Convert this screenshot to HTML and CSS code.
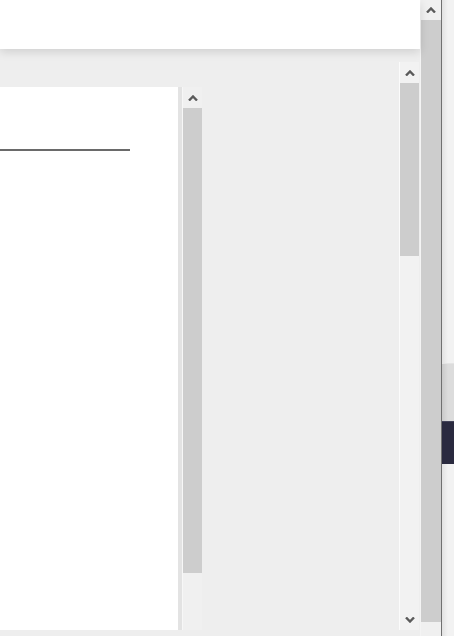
FILE: index.html
```html
<!DOCTYPE html>
<html lang="en">
<head>
    <meta charset="UTF-8">
    <meta name="viewport" content="width=device-width, initial-scale=1.0">
    <title>Document</title>
    <link rel="stylesheet" href="styles.css">
</head>
<body>
    <div class="main">
        <header class="header"></header>
        <div class="content">
            <div class="leftArea">
                <div class="panel">
                    <div class="sheet">
                        <div class="rule"></div>
                    </div>
                    <div class="gutter"></div>
                    <div class="scroll scrollLeft">
                        <div class="btn">
                            <svg width="10" height="6" viewBox="0 0 10 6"><polyline points="1,5.5 5,1.5 9,5.5" fill="none" stroke="#5a5a5a" stroke-width="2.4"/></svg>
                        </div>
                        <div class="thumb thumbLeft"></div>
                    </div>
                </div>
            </div>
            <div class="scroll scrollRight">
                <div class="btn">
                    <svg width="10" height="6" viewBox="0 0 10 6"><polyline points="1,5.5 5,1.5 9,5.5" fill="none" stroke="#5a5a5a" stroke-width="2.4"/></svg>
                </div>
                <div class="thumb thumbRight"></div>
                <div class="rest"></div>
                <div class="btn">
                    <svg width="10" height="6" viewBox="0 0 10 6"><polyline points="1,0.5 5,4.5 9,0.5" fill="none" stroke="#5a5a5a" stroke-width="2.4"/></svg>
                </div>
            </div>
        </div>
        <div class="foot"></div>
    </div>
    <div class="scroll scrollOuter">
        <div class="btn">
            <svg width="10" height="6" viewBox="0 0 10 6"><polyline points="1,5.5 5,1.5 9,5.5" fill="none" stroke="#5a5a5a" stroke-width="2.4"/></svg>
        </div>
        <div class="thumb thumbOuter"></div>
    </div>
    <div class="edge"></div>
    <div class="side">
        <div class="sideTop"></div>
        <div class="sideGrey"></div>
        <div class="sideDark"></div>
        <div class="sideBottom"></div>
    </div>
</body>
</html>
```

FILE: styles.css
```css
body {
    margin: 0;
    width: 454px;
    height: 636px;
    overflow: hidden;
    display: flex;
    background-color: #eeeeee;
}

.main {
    width: 420px;
    display: flex;
    flex-direction: column;
}

.header {
    height: 49px;
    background-color: white;
    box-shadow: 0 3px 9px rgba(0, 0, 0, 0.13);
    position: relative;
    z-index: 1;
}

.content {
    flex: 1;
    display: flex;
    background-color: #eeeeee;
}

.leftArea {
    width: 399px;
    padding-top: 38px;
    display: flex;
}

.panel {
    display: flex;
    flex: 1;
}

.sheet {
    width: 178px;
    background-color: white;
    padding-top: 62px;
}

.rule {
    width: 130px;
    height: 2px;
    background-color: #6a6a6a;
}

.gutter {
    width: 4px;
    background-color: #e3e3e3;
    border-right: 1px solid #f7f7f7;
}

.scroll {
    width: 19px;
    display: flex;
    flex-direction: column;
    background-color: #f0f0f0;
}

.btn {
    height: 21px;
    display: flex;
    align-items: center;
    justify-content: center;
    flex-shrink: 0;
}

.thumb {
    background-color: #cdcdcd;
}

.thumbLeft {
    height: 465px;
}

.scrollRight {
    margin-top: 13px;
    border-left: 1px solid #fbfbfb;
    background-color: #f2f2f2;
}

.thumbRight {
    height: 173px;
}

.rest {
    flex: 1;
}

.foot {
    height: 6px;
    background-color: #eeeeee;
}

.scrollOuter {
    width: 20px;
    border-left: 1px solid #f4f4f4;
    background-color: #f0f0f0;
}

.scrollOuter .btn {
    height: 20px;
}

.thumbOuter {
    height: 602px;
}

.edge {
    width: 1px;
    background-color: #707070;
}

.side {
    flex: 1;
    display: flex;
    flex-direction: column;
    background: linear-gradient(to right, #e2e2e2, #f2f2f2 6px);
}

.sideTop {
    height: 363px;
}

.sideGrey {
    height: 57px;
    background: linear-gradient(to right, #c9c9c9, #dcdcdc 6px);
    border-top: 1px solid #e4e4e4;
}

.sideDark {
    height: 42px;
    background-color: #2a2a3f;
    border-top: 1px solid #44445a;
}

.sideBottom {
    flex: 1;
}
```
